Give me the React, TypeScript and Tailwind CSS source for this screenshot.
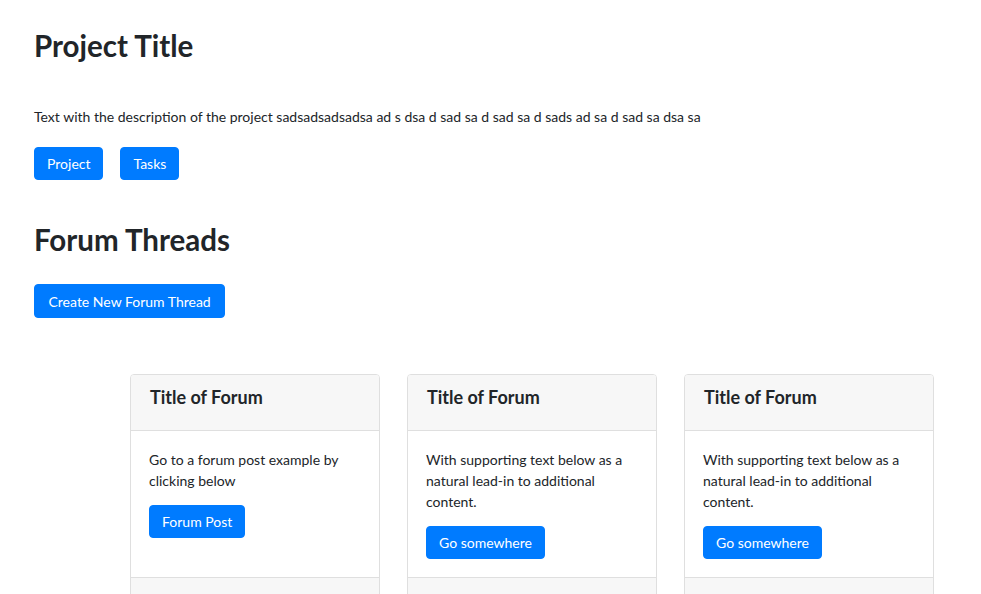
import React from "react";

function Btn({ children, wide }: { children: React.ReactNode; wide?: boolean }) {
  return (
    <button
      className={
        wide
          ? "bg-[#007bff] text-white text-[14px] leading-[21px] px-[13.5px] py-[5.5px] rounded-[4px] border border-[#007bff]"
          : "bg-[#007bff] text-white text-[14px] leading-[21px] px-3 py-[5px] rounded-[4px] border border-[#007bff]"
      }
    >
      {children}
    </button>
  );
}

function Card({ text, btn }: { text: string; btn: string }) {
  return (
    <div className="w-[250px] flex flex-col border border-[#dfdfdf] rounded-[4px] overflow-hidden bg-white">
      <div className="bg-[#f7f7f7] border-b border-[#dfdfdf] px-[19px] pt-[10px] pb-[21px]">
        <h5 className="text-[18px] font-bold leading-[24px] text-[#212529]">Title of Forum</h5>
      </div>
      <div className="flex-1 px-[18px] pt-[18px] pb-[18px]">
        <p className="text-[14px] leading-[21px] text-[#212529] mb-[14px]">{text}</p>
        <Btn>{btn}</Btn>
      </div>
      <div className="bg-[#f7f7f7] border-t border-[#dfdfdf] h-[40px]"></div>
    </div>
  );
}

export default function App() {
  return (
    <div className="min-h-[594px] bg-white text-[#212529] font-['Lato','Liberation_Sans',sans-serif] px-[34px] pt-[29px]">
      <h2 className="text-[29.5px] font-bold leading-[34px]">Project Title</h2>
      <p className="text-[14px] leading-[21px] mt-[43px]">
        Text with the description of the project sadsadsadsadsa ad s dsa d sad sa d sad sa d sads ad sa d sad sa dsa sa
      </p>
      <div className="flex gap-[17px] mt-[20px]">
        <Btn>Project</Btn>
        <Btn>Tasks</Btn>
      </div>
      <h2 className="text-[29.5px] font-bold leading-[34px] mt-[43px]">Forum Threads</h2>
      <div className="mt-[27px] flex">
        <Btn wide>Create New Forum Thread</Btn>
      </div>
      <div className="flex gap-[27px] ml-[96px] mt-[56px]">
        <Card text="Go to a forum post example by clicking below" btn="Forum Post" />
        <Card text="With supporting text below as a natural lead-in to additional content." btn="Go somewhere" />
        <Card text="With supporting text below as a natural lead-in to additional content." btn="Go somewhere" />
      </div>
    </div>
  );
}
